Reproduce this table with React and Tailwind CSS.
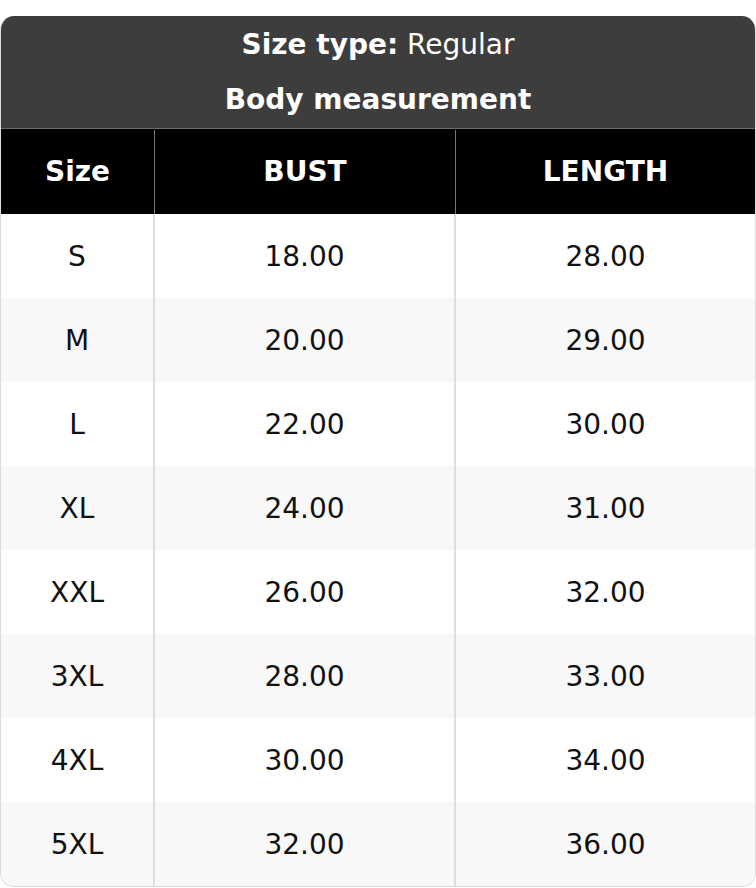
import React from "react";

const rows = [
  ["S", "18.00", "28.00"],
  ["M", "20.00", "29.00"],
  ["L", "22.00", "30.00"],
  ["XL", "24.00", "31.00"],
  ["XXL", "26.00", "32.00"],
  ["3XL", "28.00", "33.00"],
  ["4XL", "30.00", "34.00"],
  ["5XL", "32.00", "36.00"],
];

export default function App() {
  return (
    <div className="w-[756px] pt-[16px] bg-white" style={{ fontFamily: '"DejaVu Sans", sans-serif' }}>
      <div className="rounded-[14px] overflow-hidden border border-t-0 border-[#dcdcdc] bg-white">
        <div className="bg-[#3d3d3d] text-white text-[28px] text-center h-[113px] pt-[1px] border-b border-[#6e6e6e]">
          <div className="leading-[55px]">
            <span className="font-bold">Size type:</span> Regular
          </div>
          <div className="leading-[55px] font-bold">Body measurement</div>
        </div>
        <div className="grid grid-cols-[154px_301px_1fr] bg-black text-white font-bold text-[28px] h-[85px] pt-[1px]">
          <div className="flex items-center justify-center border-r border-[#777]">Size</div>
          <div className="flex items-center justify-center border-r border-[#777]">BUST</div>
          <div className="flex items-center justify-center">LENGTH</div>
        </div>
        {rows.map((r, i) => (
          <div
            key={r[0]}
            className={
              "grid grid-cols-[154px_301px_1fr] h-[84px] text-[28px] text-[#111] " +
              (i % 2 === 1 ? "bg-[#f8f8f8]" : "bg-white")
            }
          >
            <div className="flex items-center justify-center pt-[2px] border-r-2 border-[#dedede]">{r[0]}</div>
            <div className="flex items-center justify-center pt-[2px] border-r-2 border-[#dedede]">{r[1]}</div>
            <div className="flex items-center justify-center pt-[2px]">{r[2]}</div>
          </div>
        ))}
      </div>
    </div>
  );
}
